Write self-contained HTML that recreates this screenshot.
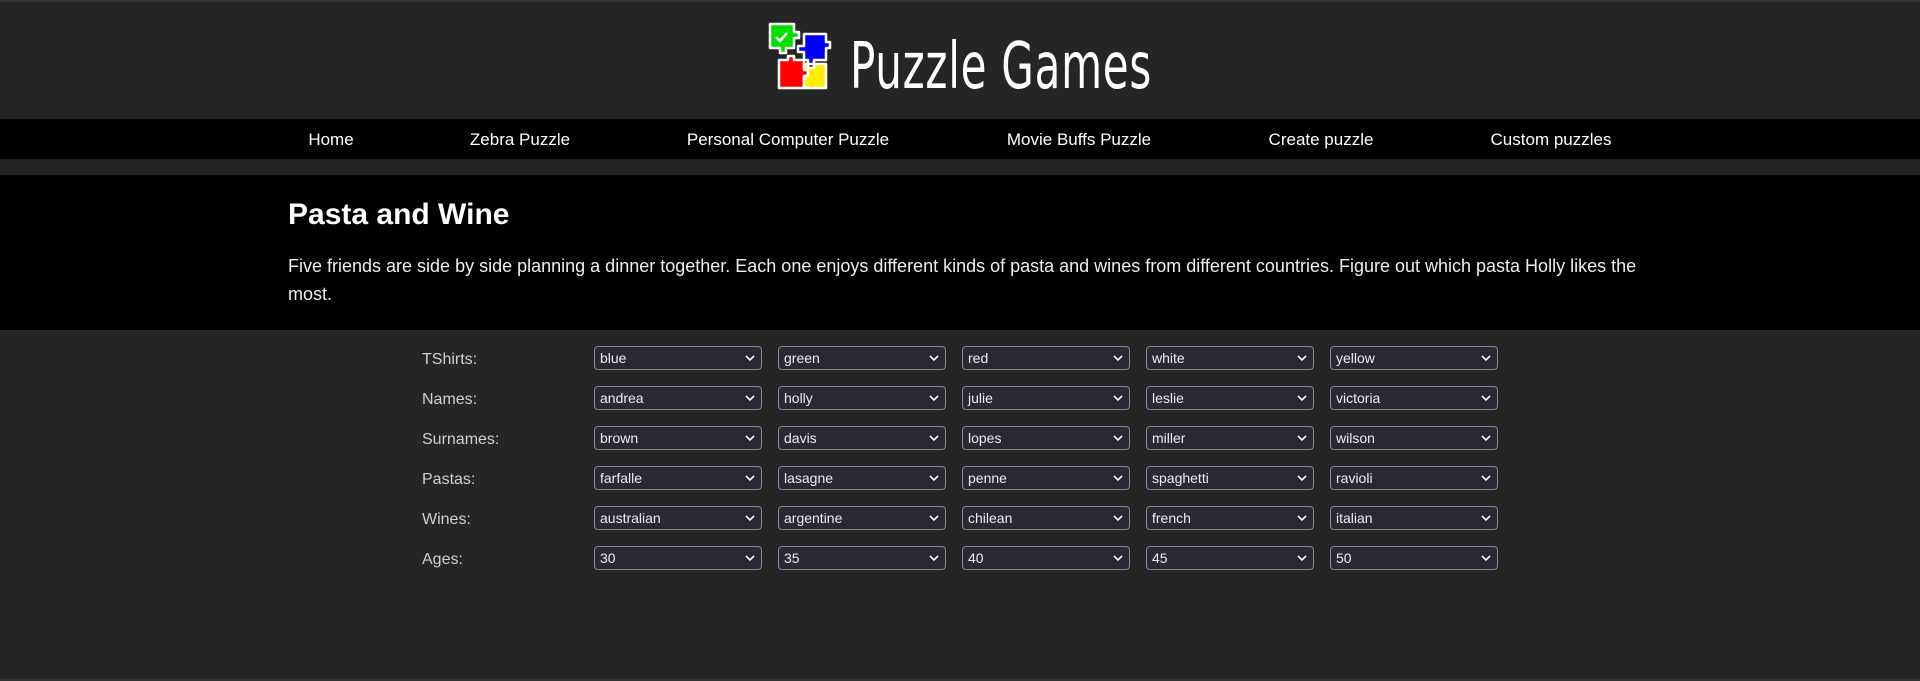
<!DOCTYPE html>
<html><head><meta charset="utf-8"><style>
*{margin:0;padding:0;box-sizing:border-box}
body{width:1920px;height:681px;background:#252525;font-family:"Liberation Sans","DejaVu Sans",sans-serif;color:#fff;position:relative;overflow:hidden}
.top{position:absolute;top:0;left:0;width:1920px;height:2px;background:#333}
.bot{position:absolute;bottom:0;left:0;width:1920px;height:2px;background:#333}
.logo{position:absolute;left:768px;top:22px}
.brand{position:absolute;left:850px;top:22px;font-family:"Liberation Sans Narrow","DejaVu Sans Condensed",sans-serif;font-size:64px;font-weight:300;line-height:90px;letter-spacing:1px;transform:scaleX(0.73);transform-origin:left;white-space:nowrap}
.nav{position:absolute;top:119px;left:0;width:1920px;height:40px;background:#000}
.nav span{position:absolute;top:1px;line-height:40px;font-size:17px;transform:translateX(-50%);white-space:nowrap}
.hero{position:absolute;top:175px;left:0;width:1920px;height:155px;background:#000}
.hero h1{position:absolute;left:288px;top:23px;font-size:30px;font-weight:bold}
.hero p{position:absolute;left:288px;top:77px;font-size:18px;line-height:28px;color:#eee;white-space:nowrap}
.lab{position:absolute;left:422px;font-size:16px;color:#d0d0d0;line-height:24px;margin-top:2px}
.sel{position:absolute;width:168px;height:24px;background:#2a2833;border:1px solid #8a8a92;border-radius:4px;font-size:14px;line-height:22px;padding-left:5px;color:#eee}
.sel svg{position:absolute;right:6px;top:8px}
</style></head><body>
<div class="top"></div>
<svg class="logo" width="66" height="70" viewBox="0 0 66 70">
<g stroke="#fff" stroke-width="2.5" stroke-linejoin="round">
<path d="M2 2h24v8h5v6h-5v10h-8v5h-6v-5H2z" fill="#00e000"/>
<path d="M36 12h22v8h4v6h-4v12H46v4h-6v-4H36V30h-6v-6h6z" fill="#0000ff"/>
<path d="M11 38h9v-4h6v4h10v10h4v6h-4v12H11z" fill="#ff0000"/>
<path d="M36 42h4v4h6v-4h12v24H36V54h4v-6h-4z" fill="#ffee00"/>
</g>
<path d="M8 15l4 4 7-8" stroke="#fff" stroke-width="2.5" fill="none"/>
</svg>
<div class="brand">Puzzle Games</div>
<div class="nav">
<span style="left:331px">Home</span>
<span style="left:520px">Zebra Puzzle</span>
<span style="left:788px">Personal Computer Puzzle</span>
<span style="left:1079px">Movie Buffs Puzzle</span>
<span style="left:1321px">Create puzzle</span>
<span style="left:1551px">Custom puzzles</span>
</div>
<div class="hero">
<h1>Pasta and Wine</h1>
<p>Five friends are side by side planning a dinner together. Each one enjoys different kinds of pasta and wines from different countries. Figure out which pasta Holly likes the<br>most.</p>
</div>
<div id="f"></div>
<script>
var rows=[["TShirts:",["blue","green","red","white","yellow"]],["Names:",["andrea","holly","julie","leslie","victoria"]],["Surnames:",["brown","davis","lopes","miller","wilson"]],["Pastas:",["farfalle","lasagne","penne","spaghetti","ravioli"]],["Wines:",["australian","argentine","chilean","french","italian"]],["Ages:",["30","35","40","45","50"]]];
var h="";rows.forEach(function(r,i){var y=346+i*40;h+='<div class="lab" style="top:'+y+'px">'+r[0]+'</div>';r[1].forEach(function(v,j){h+='<div class="sel" style="top:'+y+'px;left:'+(594+j*184)+'px">'+v+'<svg width="10" height="7" viewBox="0 0 10 7"><path d="M1 1l4 4 4-4" stroke="#fff" stroke-width="1.6" fill="none"/></svg></div>'})});
document.getElementById("f").innerHTML=h;
</script>
<div class="bot"></div>
</body></html>
